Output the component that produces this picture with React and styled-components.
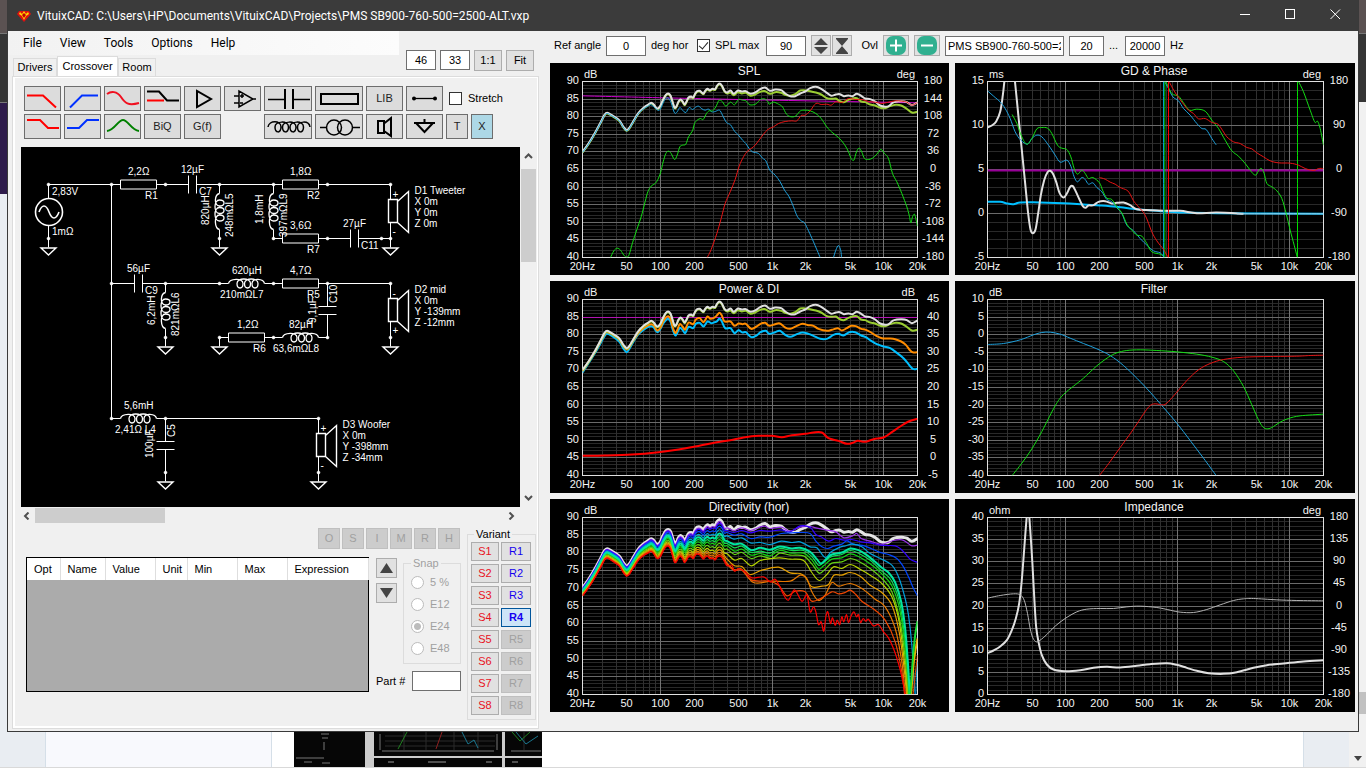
import React from 'react';
import styled, { createGlobalStyle } from 'styled-components';

const GlobalStyle = createGlobalStyle`
  * {
    box-sizing: border-box;
  }
  body {
    margin: 0;
    background: #fff;
    color: #000;
    font-family: 'Liberation Sans', Arial, sans-serif;
    font-size: 11px;
    line-height: 13px;
  }
  button, input {
    font: inherit;
    color: inherit;
    margin: 0;
  }
`;

/* ---------- desktop behind the window ---------- */

const Desktop = styled.div`
  display: flex;
  flex-direction: column;
  min-height: 100vh;
  overflow: hidden;
`;

const Middle = styled.div`
  display: flex;
`;

const LeftEdge = styled.div`
  width: 7px;
  background: linear-gradient(#5b5252 33px, #777 33px 34px, #353535 34px 102px, #777 102px 103px, #2e1b4b 103px 194px, #e9edf2 194px);
`;

const RightEdge = styled.div`
  width: 7px;
  background: linear-gradient(#5b5252 33px, #777 33px 34px, #353535 34px 102px, #f1f1f1 102px 692px, #c1c1c1 692px 714px, #f1f1f1 714px);
`;

const Bottom = styled.div`
  flex: 1;
  display: flex;
  min-height: 37px;
  border-bottom: 2px solid #d9d9d9;
`;

const Block = styled.div`
  width: ${(props) => props.$w}px;
  background: ${(props) => props.$bg};
  border-right: 1px solid ${(props) => props.$line || props.$bg};
`;

const Filler = styled.div`
  flex: 1;
`;

const Thumb = styled.svg`
  display: block;
  width: 248px;
  height: 35px;
`;

const PageScroll = styled.div`
  display: flex;
  justify-content: center;
  align-items: flex-end;
  width: 17px;
  padding-bottom: 6px;
  background: #f1f1f1;
`;

/* ---------- window ---------- */

const Window = styled.div`
  flex: 1;
  min-width: 0;
  background: #f0f0f0;
  border: 1px solid #3a3a3a;
  border-top: none;
`;

const TitleBar = styled.header`
  display: flex;
  align-items: center;
  height: 31px;
  padding-left: 9px;
  background: #3b3b3b;
  color: #fff;
`;

const Title = styled.h1`
  flex: 1;
  margin: 0 0 0 6px;
  font: 400 12px/16px Roboto, sans-serif;
`;

const WinButton = styled.button`
  width: 45px;
  height: 31px;
  padding: 0;
  border: none;
  background: none;
`;

const Body = styled.div`
  display: flex;
`;

const LeftPane = styled.div`
  width: 542px;
  padding-bottom: 2px;
`;

const RightPane = styled.div`
  flex: 1;
  min-width: 0;
  padding-right: 3px;
`;

const Head = styled.div`
  display: flex;
  height: 45px;
`;

const HeadLeft = styled.div`
  display: flex;
  flex-direction: column;
  justify-content: space-between;
  width: 391px;
`;

const Menu = styled.nav`
  display: flex;
  height: 24px;
  padding-left: 6px;
  background: linear-gradient(90deg, #f2f2f2, #fcfcfc);
`;

const MenuItem = styled.button`
  padding: 0 9px;
  border: none;
  background: none;
  font: 400 12px/16px Roboto, sans-serif;
`;

const Tabs = styled.div`
  display: flex;
  align-items: flex-end;
  padding-left: 5px;
`;

const Tab = styled.button`
  width: ${(props) => props.$w}px;
  height: ${(props) => (props.$on ? 20 : 18)}px;
  padding: 0;
  border: 1px solid #dcdcdc;
  border-bottom: none;
  background: ${(props) => (props.$on ? '#fff' : '#f0f0f0')};
`;

const ZoomBar = styled.div`
  display: flex;
  gap: 4px;
  padding: 19px 0 0 7px;
`;

const Field = styled.input`
  width: ${(props) => props.$w}px;
  height: 20px;
  padding: 0 2px;
  border: 1px solid #6f6f6f;
  background: #fff;
  text-align: ${(props) => props.$align || 'center'};
`;

const Button = styled.button`
  display: flex;
  align-items: center;
  justify-content: center;
  width: ${(props) => props.$w}px;
  height: ${(props) => props.$h || 21}px;
  padding: 0;
  border: 1px solid ${(props) => (props.disabled ? '#bfbfbf' : '#adadad')};
  background: ${(props) => (props.disabled ? '#cccccc' : '#e1e1e1')};
  color: ${(props) => (props.disabled ? '#a0a0a0' : props.$color || '#000')};
`;

const VariantButton = styled(Button)`
  ${(props) => props.$on && `
    border-color: #00559b;
    background: #cce4f7;
    font-weight: 700;
  `}
`;

const TabPanel = styled.section`
  margin: 0 11px 0 4px;
  padding: 9px 2px 8px 8px;
  border: 1px solid #dcdcdc;
  box-shadow: inset 2px -2px 0 #fff, inset -1px 1px 0 #fff;
`;

const Tools = styled.div`
  display: grid;
  grid-template-columns: repeat(6, 37px) 48px 48px 37px 37px auto;
  gap: 3px;
  margin: 0 0 8px 3px;
`;

const Tool = styled.button`
  display: flex;
  align-items: center;
  justify-content: center;
  height: 25px;
  padding: 0;
  border: 1px solid #6d6d6d;
  background: ${(props) => (props.$active ? '#add8e6' : '#dcdcdc')};
  color: #222;
  ${(props) => props.$w && `width: ${props.$w}px;`}
  ${(props) => props.$col && `grid-column: ${props.$col};`}

  svg {
    margin: -1px;
    fill: none;
    stroke: #000;
    stroke-width: 2;
  }
`;

const ToolEnd = styled.div`
  display: flex;
  align-items: center;
  gap: 3px;
`;

const CheckLabel = styled.label`
  display: flex;
  align-items: center;
  gap: 6px;
  padding-left: 3px;
`;

const Check = styled.input`
  appearance: none;
  display: grid;
  place-items: center;
  width: 13px;
  height: 13px;
  border: 1px solid #333;
  background: #fff;

  &:checked::after {
    content: '';
    width: 4px;
    height: 8px;
    margin-bottom: 2px;
    border: solid #222;
    border-width: 0 1px 1px 0;
    transform: rotate(40deg);
  }
`;

const CanvasArea = styled.div`
  display: grid;
  grid-template-columns: 1fr 15px;
  grid-template-rows: auto 15px;
  gap: 1px;
`;

const Schematic = styled.svg`
  display: block;
  width: 100%;
  background: #000;
  fill: none;
  stroke: #fff;
  stroke-width: 1;

  text {
    fill: #fff;
    stroke: none;
    font: 10px 'Liberation Sans', Arial, sans-serif;
  }
`;

const ScrollBar = styled.div`
  display: flex;
  flex-direction: ${(props) => (props.$vertical ? 'column' : 'row')};
  align-items: center;
  justify-content: space-between;
  padding: ${(props) => (props.$vertical ? '5px 0' : '0 4px 0 1px')};
`;

const ScrollTrack = styled.div`
  flex: 1;
  align-self: stretch;
  margin: ${(props) => (props.$vertical ? '9px 0' : '0 4px')};
`;

const ScrollThumb = styled.div`
  width: ${(props) => props.$w}px;
  height: ${(props) => props.$h}px;
  background: #cdcdcd;
`;

const Lower = styled.div`
  display: flex;
  gap: 6px;
  margin: 5px 0 0 5px;
`;

const LowerMain = styled.div`
  width: 435px;
`;

const ModeRow = styled.div`
  display: flex;
  justify-content: flex-end;
  gap: 2px;
  margin: 0 1px 8px 0;
`;

const PartsRow = styled.div`
  display: flex;
  gap: 7px;
`;

const PartsBox = styled.div`
  width: 343px;
  height: 135px;
  border: 1px solid #000;
  background: #ababab;
`;

const PartsTable = styled.table`
  width: 100%;
  table-layout: fixed;
  border-collapse: collapse;
  background: #fff;

  th {
    height: 22px;
    padding: 0 7px;
    border-right: 1px solid #dedede;
    font-weight: 400;
    text-align: left;
  }
`;

const Side = styled.div`
  width: 85px;
`;

const SideTop = styled.div`
  display: flex;
  gap: 6px;
  margin-bottom: 7px;
`;

const Arrows = styled.div`
  display: flex;
  flex-direction: column;
  gap: 5px;
  padding-top: 1px;
`;

const Group = styled.fieldset`
  min-width: 0;
  margin: 0;
  padding: 1px ${(props) => props.$pad}px 3px;
  width: ${(props) => props.$w}px;
  height: ${(props) => props.$h}px;
  border: 1px solid #dcdcdc;
  color: ${(props) => (props.disabled ? '#a0a0a0' : '#000')};
`;

const Legend = styled.legend`
  padding: 0 2px;
  margin-left: 3px;
`;

const SnapLegend = styled(Legend)`
  margin-left: 0;
`;

const RadioLabel = styled.label`
  display: flex;
  align-items: center;
  gap: 6px;
  height: 22px;
`;

const Radio = styled.input`
  appearance: none;
  width: 13px;
  height: 13px;
  border: 1px solid #bcbcbc;
  border-radius: 50%;
  background: #fff;

  &:checked {
    background: radial-gradient(#bcbcbc 3px, #fff 4px);
  }
`;

const PartRow = styled.div`
  display: flex;
  align-items: center;
  justify-content: space-between;
`;

const VariantGrid = styled.div`
  display: grid;
  grid-template-columns: 28px 30px;
  gap: 3px 2px;
`;

const TopBar = styled.div`
  display: flex;
  align-items: center;
  gap: 5px;
  height: 29px;
  margin-bottom: 3px;
  padding-left: 4px;
`;

const Caption = styled.label`
  width: ${(props) => props.$w}px;
  text-align: ${(props) => props.$align || 'left'};
  white-space: nowrap;
`;

const Pair = styled.div`
  display: flex;
  gap: 1px;
`;

const Charts = styled.div`
  display: grid;
  grid-template-columns: 399fr 400fr;
  gap: 6px;
`;

const ChartSvg = styled.svg`
  display: block;
  width: 100%;
  background: #000;

  text {
    fill: #f4f4f4;
    font: 11px 'Liberation Sans', Arial, sans-serif;
  }
  .title {
    font-size: 12px;
  }
`;

/* ---------- charts ---------- */

// points are "x,y x,y ..." strings, drawn as a smooth line through all of them
const parse = (text) => text.trim().split(/\s+/).map((p) => p.split(',').map(Number));

const smooth = (pts) => {
  let d = `M${pts[0]}`;
  for (let i = 0; i < pts.length - 1; i++) {
    const a = pts[i - 1] || pts[i];
    const b = pts[i];
    const c = pts[i + 1];
    const e = pts[i + 2] || c;
    d += `C${b[0] + (c[0] - a[0]) / 6} ${b[1] + (c[1] - a[1]) / 6} ${c[0] - (e[0] - b[0]) / 6} ${c[1] - (e[1] - b[1]) / 6} ${c[0]} ${c[1]}`;
  }
  return d;
};

const FREQS = [[20, '20Hz'], [50, '50'], [100, '100'], [200, '200'], [500, '500'], [1000, '1k'], [2000, '2k'], [5000, '5k'], [10000, '10k'], [20000, '20k']];

const freqLines = () => {
  const list = [];
  [10, 100, 1000, 10000].forEach((decade) => {
    for (let i = 1; i < 10; i++) {
      const f = decade * i;
      if (f > 20 && f < 20000) list.push([f, i === 1]);
    }
  });
  return list.sort((a, b) => a[1] - b[1]);
};

const Chart = ({ title, unit, unitRight, left, right, minor, width, height = 212, top = 64, curves }) => {
  const w = width - 64;
  const h = height === 212 ? 176 : 177;
  const x = (f) => Math.round(32 + (Math.log10(f / 20) / 3) * w) + 0.5;
  const steps = left.length - 1;
  const y = (i, n) => Math.round(18 + (i / n) * h) + 0.5;
  const rows = steps * minor;
  return (
    <ChartSvg viewBox={`0 0 ${width} ${height}`} role="img" aria-label={title}>
      <g stroke="#292929">
        {Array.from({ length: rows }, (_, i) => (
          <path key={i} d={`M32 ${y(i, rows)}h${w}`} />
        ))}
      </g>
      {freqLines().map(([f, major]) => (
        <path key={f} d={`M${x(f)} 18v${h}`} stroke={major ? '#737373' : '#303030'} />
      ))}
      <g stroke="#6a6a6a">
        {left.map((label, i) => (
          <path key={label} d={`M32 ${y(i, steps)}h${w}`} />
        ))}
      </g>
      <rect x="32.5" y="18.5" width={w} height={h} fill="none" stroke="#e0e0e0" />
      <svg x="32.5" y="18.5" width={w} height={h} viewBox={`112 ${top} ${w * 3} ${h * 3}`} preserveAspectRatio="none">
        {curves.map(([color, size, pts], i) => (
          <path key={i} d={smooth(typeof pts === 'string' ? parse(pts) : pts)} fill="none" stroke={color} strokeWidth={size * 3} strokeLinejoin="round" />
        ))}
      </svg>
      <text className="title" x="199" y="12" textAnchor="middle">{title}</text>
      <text x="34" y="15">{unit}</text>
      <text x={width - 34} y="15" textAnchor="end">{unitRight}</text>
      {left.map((label, i) => (
        <text key={label} x="29" y={y(i, steps) + 2} textAnchor="end">{label}</text>
      ))}
      {right.map((label, i) => (
        <text key={label} x={width - 16} y={y(i, right.length - 1) + 2} textAnchor="middle">{label}</text>
      ))}
      {FREQS.map(([f, label]) => (
        <text key={f} x={x(f)} y={height - 5} textAnchor="middle">{label}</text>
      ))}
    </ChartSvg>
  );
};

const range = (from, to, step) => {
  const list = [];
  for (let v = from; v >= to; v -= step) list.push(v);
  return list;
};

const LOW = '112,275 130,250 150,217 168,183 178,164 186,158 200,165 222,180 234,199 244,210 252,204 264,184 280,158 295,143 308,134 318,128 326,133 332,142 338,145 346,136 354,118 362,104 369,100 376,106 382,124 388,142 394,138 400,124 406,118 412,123 418,133 424,124 430,112 438,109 444,112 450,100 456,93 464,92 470,97 475,100 480,92 487,86 494,90 502,86 510,87 516,76 523,70 530,76 538,92';
const ON_AXIS = `${LOW} 546,97 556,91 566,101 578,91 590,94 602,93 616,101 630,97 645,87 660,82 674,92 690,88 708,90 720,100 735,108 750,108 765,100 780,94 795,84 812,80 828,86 845,98 858,107 872,103 884,102 896,108 910,106 922,108 935,101 948,107 960,115 975,117 990,124 1005,136 1020,140 1032,137 1042,128 1055,124 1070,123 1085,126 1100,135 1117,127`;
const LISTENING = [
  ...parse(LOW).map(([x, y]) => [x, y + 2]),
  ...parse('546,100 556,97 566,105 578,96 590,100 602,98 616,107 630,103 645,95 660,93 674,101 690,96 708,98 720,104 735,107 750,102 765,91 780,91 795,93 812,97 828,103 845,114 860,116 872,115 884,123 896,126 910,119 922,115 935,114 948,124 960,126 975,133 990,136 1005,143 1020,144 1035,138 1052,134 1068,136 1082,144 1100,157 1117,155'),
];

const SPL = [
  ['#d000d0', 1, '112,107 400,114 680,120 1117,128'],
  ['#9acd32', 2, LISTENING],
  ['#e0e0e0', 2, ON_AXIS],
  ['#1ea0dc', 1, '112,277 130,252 150,219 168,185 178,166 186,160 200,167 222,182 234,201 244,212 252,206 264,186 280,160 295,146 308,138 318,134 338,150 346,146 354,128 362,115 370,114 378,128 388,158 396,155 404,142 412,150 422,157 432,142 442,148 450,142 460,138 470,146 480,150 490,147 500,155 510,154 523,150 532,165 544,187 556,194 568,213 580,225 592,240 602,250 612,265 622,275 640,280 652,294 662,302 674,330 690,345 705,365 718,390 732,410 745,440 756,468 768,482 778,488 790,512 805,545 825,592'],
  ['#1ea0dc', 1, '865,592 872,570 880,556 887,572 889,592'],
  ['#14dc14', 1, '196,592 206,572 216,564 226,570 236,585 245,591 252,583 262,548 275,508 288,470 300,424 308,395 318,378 330,370 338,358 346,338 354,305 362,280 370,273 378,280 388,298 396,285 404,260 412,255 422,252 430,230 442,212 448,190 456,180 466,175 474,178 484,160 492,152 502,152 512,140 522,120 532,125 542,138 556,126 568,134 580,118 592,120 602,122 612,133 624,134 634,130 646,118 658,116 668,124 672,132 685,126 700,132 712,140 724,162 738,170 752,167 766,152 780,150 795,152 812,160 828,175 845,200 860,216 880,232 898,253 910,275 918,295 926,300 934,275 942,264 950,276 958,295 970,298 982,294 995,282 1007,268 1018,280 1030,295 1042,340 1055,365 1070,400 1085,440 1092,465 1097,488 1102,470 1108,462 1113,480 1117,498'],
  ['#e61414', 1, '486,592 498,568 515,520 528,475 540,430 555,395 570,358 582,318 595,290 608,272 625,260 640,242 655,222 668,208 685,200 700,190 720,184 740,182 755,182 768,166 780,165 795,152 812,130 828,133 845,132 858,135 872,125 890,127 910,115 930,118 950,118 970,124 990,126 1010,130 1030,126 1050,122 1070,123 1085,126 1100,135 1117,127'],
];

const GD = [
  ['#960096', 2, '112,331 1120,331'],
  ['#00bfff', 2, '112,425 150,425 170,430 190,432 210,427 250,426 340,429 400,433 450,436 500,440 560,447 620,452 700,457 800,459 1120,461'],
  ['#e0e0e0', 2, '112,202 125,196 138,184 150,155 158,105 163,60'],
  ['#e0e0e0', 2, '194,60 200,120 208,200 218,300 226,380 234,460 241,508 248,519 256,508 264,460 272,405 282,360 292,336 300,332 308,340 318,365 328,398 340,412 350,400 360,380 368,378 376,392 388,418 398,438 406,443 415,436 430,435 445,425 465,423 485,430 500,428 520,427 540,435 560,447 600,450 640,452 690,452 740,459 800,457 880,461'],
  ['#a8cfe4', 1, '860,461 1120,461'],
  ['#1ea0dc', 1, '112,92 135,112 150,125 165,145 180,175 195,215 212,240 232,252 245,235 260,225 275,230 295,255 315,285 330,306 350,300 362,318 372,350 382,365 395,352 405,358 415,372 428,368 440,382 455,395 470,418 485,425 500,443 515,460 530,495 550,512 570,535 590,555 610,572 630,578 641,590'],
  ['#1ea0dc', 1, '643,64 655,85 668,110 685,122 700,145 720,165 740,190 755,205 768,208 785,235 798,254'],
  ['#14dc14', 1, '186,163 200,190 215,230 230,252 245,235 260,206 275,202 292,204 305,220 322,255 335,264 350,268 362,290 372,325 382,342 395,330 405,340 415,355 428,352 448,368 458,392 470,414 485,418 500,441 515,458 530,492 545,510 560,525 575,528 590,550 605,575 630,582 642,590'],
  ['#14dc14', 1, '647,64 665,100 685,108 700,128 718,150 740,147 765,153 785,180 805,205 825,240 845,272 865,288 885,310 900,330 910,342 918,344 926,330 934,325 942,340 950,370 965,380 980,392 995,415 1008,460 1020,510 1032,555 1041,590'],
  ['#00a0c8', 1, '640,64 640,592'],
  ['#00d200', 1, '644,64 644,592'],
  ['#00dc00', 1, '1042,64 1042,592'],
  ['#14dc14', 1, '1045,64 1060,95 1080,150 1094,186 1102,183 1110,205 1120,255'],
  ['#e61414', 1, '448,352 465,357 480,366 495,372 510,382 530,390 540,402 550,422 565,440 585,465 605,515 620,542 640,568 650,585 653,590'],
  ['#ff0000', 1, '655,64 655,592'],
  ['#e61414', 1, '657,64 665,80 680,105 700,132 715,150 730,160 745,176 765,175 785,187 803,192 818,212 830,230 850,245 870,250 890,262 905,266 920,278 940,290 960,302 985,308 1020,309 1045,315 1065,325 1090,331 1105,325 1120,325'],
];

const POWER = [
  ['#b414b4', 1, '112,118 1117,118'],
  ['#00bfff', 2, '112,283 150,224 178,174 186,167 200,173 222,190 234,210 244,222 252,213 264,192 280,168 295,155 308,147 318,144 326,148 332,158 338,162 346,152 354,136 362,126 369,122 376,130 382,152 390,171 396,165 404,149 412,155 420,165 430,146 444,150 452,137 464,134 475,145 487,130 498,135 508,132 515,130 523,121 530,130 540,150 556,150 568,165 580,156 592,163 602,162 618,177 634,172 646,162 662,158 672,167 690,162 704,158 720,170 735,176 755,168 772,163 790,167 805,173 825,182 845,182 865,170 880,167 895,172 912,162 930,162 948,172 962,177 978,188 995,198 1015,205 1035,210 1055,224 1075,240 1090,258 1103,272 1117,272'],
  ['#ff8c00', 2, '112,279 150,220 178,168 186,162 200,168 222,184 234,203 244,214 252,208 264,188 280,164 295,150 308,142 318,138 326,142 332,152 338,157 346,148 354,130 362,118 369,114 376,122 382,145 390,164 396,156 404,138 412,145 420,154 430,133 444,138 452,124 464,120 475,132 487,115 496,122 508,118 515,112 523,104 530,112 538,130 556,130 568,143 580,136 592,138 602,137 618,152 634,145 646,137 660,134 672,143 690,138 704,136 720,148 735,152 755,143 772,137 790,141 805,143 820,152 845,158 860,155 878,150 890,157 905,150 918,143 932,144 948,152 962,155 978,163 995,174 1010,180 1030,181 1050,183 1068,190 1082,200 1095,217 1105,223 1117,222'],
  ['#9acd32', 2, LISTENING],
  ['#e0e0e0', 2, ON_AXIS],
  ['#ff0000', 2, '112,533 180,532 260,529 340,522 400,514 450,505 500,495 550,487 600,477 640,473 680,473 710,477 740,471 780,467 805,463 830,463 850,480 880,488 905,497 925,493 938,488 960,491 985,483 1015,478 1040,462 1065,445 1090,430 1117,422'],
];

const FILTER = [
  ['#1ea0dc', 1, '112,199 160,196 210,185 250,170 275,163 300,162 330,168 360,180 400,196 440,212 480,232 520,262 560,300 600,342 640,388 680,435 720,487 760,540 798,592'],
  ['#14dc14', 1, '186,592 215,555 245,512 275,460 310,392 330,360 350,340 370,324 400,300 440,263 475,237 500,224 530,217 570,215 620,217 680,221 740,228 785,237 820,250 850,278 880,325 905,380 925,425 938,446 950,452 965,448 990,432 1015,421 1050,413 1120,408'],
  ['#e61414', 1, '448,592 480,550 510,508 540,467 565,430 585,400 600,382 615,377 640,380 655,370 680,342 710,307 745,275 780,256 820,244 880,237 960,235 1040,234 1080,232 1120,231'],
];

const IMPEDANCE = [
  ['#e0e0e0', 2, '112,474 130,466 150,454 170,435 185,405 197,370 207,325 214,265 220,190 226,110 230,60'],
  ['#e0e0e0', 2, '237,60 242,130 247,210 253,320 258,395 265,440 275,480 290,508 310,523 345,528 390,525 430,518 470,515 510,517 560,512 600,507 650,504 680,509 710,518 740,527 775,534 820,536 860,531 910,518 950,510 1000,505 1060,499 1120,495'],
  ['#b4b4b4', 1, '112,309 150,301 190,296 210,299 222,315 232,355 240,400 248,428 258,440 270,435 290,418 315,393 345,370 380,350 410,342 450,340 490,340 530,335 570,333 620,337 660,345 690,351 730,352 770,343 810,329 850,316 880,311 910,310 980,314 1040,316 1120,317'],
];

// off-axis responses share the low end and spread apart towards the midrange
const spread = (x) => {
  const table = [[112, 24], [186, 28], [244, 30], [318, 38], [369, 50], [440, 74], [523, 110], [540, 104]];
  for (let i = 1; i < table.length; i++) {
    const [x0, y0] = table[i - 1];
    const [x1, y1] = table[i];
    if (x <= x1) return y0 + ((x - x0) / (x1 - x0)) * (y1 - y0);
  }
  return 104;
};

const offAxis = (part, tail) => [
  ...parse(LOW).map(([x, y]) => [x, y + 3 + part * spread(x)]),
  ...parse(tail),
];

const DIRECTIVITY = [
  ['#e6e6e6', 3, parse(ON_AXIS).map(([x, y]) => [x, y + 3])],
  ['#9632e6', 1.2, offAxis(0.05, '546,98 566,106 590,98 616,106 645,95 660,93 674,100 708,96 735,108 765,95 795,94 812,98 845,105 872,110 896,128 922,122 935,115 948,130 975,138 1005,147 1020,145 1045,136 1070,134 1085,142 1100,152 1117,150')],
  ['#3200ff', 1.2, offAxis(0.1, '546,106 566,112 590,106 616,113 645,106 674,108 708,104 735,110 765,92 795,97 812,118 828,125 850,138 872,130 896,135 920,133 948,140 975,143 1005,150 1025,151 1050,152 1065,160 1080,175 1095,192 1117,202')],
  ['#0046ff', 1.2, offAxis(0.18, '546,112 566,120 590,116 616,130 645,125 674,126 708,115 740,113 765,112 795,115 812,138 830,155 848,160 865,153 890,147 905,137 925,147 960,153 1000,170 1030,178 1055,190 1075,215 1090,245 1105,280 1117,302')],
  ['#00a0dc', 1.2, offAxis(0.28, '546,122 566,132 590,128 616,143 645,142 674,148 708,138 740,142 765,140 795,155 815,158 840,187 858,170 880,158 900,152 922,147 950,155 975,175 1010,192 1040,210 1060,245 1080,310 1090,360 1100,450 1107,560 1110,597')],
  ['#14dc50', 1.2, offAxis(0.47, '546,145 568,158 590,153 618,172 645,168 674,174 704,160 740,166 775,166 800,184 820,210 835,202 860,184 890,178 915,166 940,174 975,195 1010,228 1040,258 1065,330 1082,460 1092,597')],
  ['#14d214', 1.2, offAxis(0.55, '546,152 568,168 590,162 618,180 645,175 674,182 704,166 740,174 775,174 800,194 820,222 835,212 860,192 890,188 915,176 940,184 975,206 1010,236 1040,272 1065,350 1082,480 1090,597')],
  ['#64d214', 1.2, offAxis(0.65, '546,162 568,178 590,172 618,190 645,182 680,190 704,174 735,180 775,182 800,206 822,234 840,222 860,204 890,200 915,190 940,198 975,220 1010,250 1040,290 1065,380 1080,490 1088,597')],
  ['#b4d200', 1.2, offAxis(0.75, '546,176 568,195 590,190 618,212 645,196 680,190 704,188 735,192 775,196 800,232 822,256 845,238 865,215 890,220 915,208 945,222 975,240 1010,265 1040,305 1062,380 1080,520 1086,597')],
  ['#e6a000', 1.2, offAxis(0.83, '546,192 568,212 590,214 615,238 650,225 700,216 735,233 765,235 780,245 800,275 830,273 850,268 866,240 890,240 915,232 945,243 975,270 1010,292 1040,330 1062,410 1078,530 1084,597')],
  ['#e67800', 1.2, offAxis(0.9, '546,205 568,224 590,222 625,262 680,258 735,258 765,240 785,250 800,290 820,316 840,300 860,262 880,273 915,265 950,280 990,312 1020,335 1050,400 1070,500 1080,597')],
  ['#f04600', 1.2, offAxis(0.96, '546,208 568,226 590,225 620,255 670,258 700,270 725,302 750,288 780,290 800,318 830,308 860,290 880,296 900,292 915,285 932,298 950,318 990,345 1020,375 1050,440 1070,530 1078,597')],
  ['#fa0000', 1.2, offAxis(1, '546,212 560,210 568,228 580,220 600,230 620,248 655,245 675,260 690,252 704,275 715,298 730,315 748,284 770,318 785,300 795,350 805,335 812,350 820,388 828,380 836,408 842,365 848,350 856,385 862,368 870,390 876,375 884,388 890,365 896,380 904,358 910,382 918,362 926,350 934,365 940,358 946,382 954,370 962,378 970,372 984,392 1000,388 1015,410 1030,428 1045,460 1060,505 1070,545 1080,597')],
  ['#00e6a0', 2, offAxis(0.38, '546,138 566,147 590,146 618,165 645,158 674,164 704,154 740,160 765,158 795,170 815,192 828,205 845,190 860,178 890,172 915,160 940,165 965,180 990,200 1010,218 1030,232 1050,262 1068,320 1080,400 1088,500 1094,597')],
  ['#00a0dc', 1, '1112,597 1114,540 1117,500'],
  ['#f04600', 1, '1104,597 1110,540 1117,480'],
  ['#e6b400', 2, '1098,597 1106,500 1117,430'],
  ['#14dc32', 2, '1095,597 1104,480 1110,420 1117,378'],
];

/* ---------- crossover schematic ---------- */

const Dot = ({ x, y }) => <circle cx={x} cy={y} r="1.5" fill="#fff" stroke="#fff" strokeWidth=".5" />;

const Resistor = ({ x, y }) => (
  <path d={`M${x} ${y}h9m36 0h9M${x + 9} ${y - 4.5}h36v9h-36z`} />
);

const Capacitor = ({ x, y, turn = 0 }) => (
  <path transform={`translate(${x} ${y}) rotate(${turn})`} d="M0 0h23m0 -9v18m8 -18v18m0 -9h23" />
);

const Coil = ({ x, y, turn = 0 }) => (
  <g transform={`translate(${x} ${y}) rotate(${turn})`}>
    <path d="M0 0h9M45 0h9" />
    <path strokeWidth="1.3" d="M9 0C10 -5 23.5 -6 23.5 0S17.500 6 17.5 0S31 -6 31 0S25 6 25 0S38.5 -6 38.5 0S32.5 6 32.500 0S44 -5 45 0" />
  </g>
);

const Ground = ({ x, y }) => (
  <g>
    <Dot x={x} y={y} />
    <path d={`M${x} ${y}v9`} />
    <path strokeWidth="1.4" d={`M${x - 7.5} ${y + 9.5}h15l-7.5 7z`} />
  </g>
);

const Driver = ({ x, y, lines, flip }) => (
  <g>
    <Dot x={x} y={y} />
    <path d={`M${x} ${y}v15M${x} ${y + 38}v16`} />
    <path strokeWidth="1.4" d={`M${x - 2} ${y + 15}h9v23h-9zM${x + 7} ${y + 17}l11 -10v41l-11 -10`} />
    <text x={x + 2} y={y + 13}>{flip ? '-' : '+'}</text>
    <text x={x + 2} y={y + 50}>{flip ? '+' : '-'}</text>
    {lines.map((line, i) => (
      <text key={line} x={x + 24} y={y + 9 + i * 11}>{line}</text>
    ))}
    <Ground x={x} y={y + 54} />
  </g>
);

const LABELS = [
  [107, 28, '2,2Ω'], [124, 52, 'R1'], [31, 48, '2,83V'], [31, 88, '1mΩ'], [160, 26, '12µF'], [178, 48, 'C7'],
  [106, 125, '56µF'], [124, 147, 'C9'], [211, 127, '620µH'], [199, 151, '210mΩL7'], [216, 181, '1,2Ω'],
  [269, 28, '1,8Ω'], [286, 52, 'R2'], [269, 82, '3,6Ω'], [286, 106, 'R7'], [322, 80, '27µF'], [340, 102, 'C11'],
  [269, 127, '4,7Ω'], [286, 151, 'R5'], [268, 181, '82µH'], [232, 205, 'R6'], [252, 205, '63,6mΩ'], [287, 205, 'L8'],
  [103, 262, '5,6mH'], [94, 286, '2,41Ω L4'],
];

const UPRIGHT_LABELS = [
  [188, 78, '820µH'], [212, 90, '248mΩL5'], [242, 77, '1,8mH'], [266, 90, '397mΩL9'], [134, 178, '6,2mH'],
  [158, 189, '821mΩL6'], [316, 156, 'C10'], [295, 176, '9,1µF'], [132, 311, '100µF'], [154, 290, 'C5'],
];

const DOTS = [
  [27.5, 37.5], [90.5, 37.5], [144.5, 37.5], [198.5, 37.5], [252.5, 37.5], [306.5, 37.5],
  [252.5, 91.5], [306.5, 91.5], [360.5, 91.5],
  [90.5, 136.5], [144.5, 136.5], [198.5, 136.5], [252.5, 136.5], [306.5, 136.5],
  [252.5, 190.5], [306.5, 190.5], [90.5, 271.5], [144.5, 271.5],
];

const Circuit = () => (
  <Schematic viewBox="0 0 499 360" role="img" aria-label="Crossover schematic">
    <path d="M27.5 37.5H90.5V271.5M198.5 37.5H252.5M306.5 37.5H369.5M360.5 91.5h9M144.5 136.5h54M306.5 136.5h63M144.5 271.5h153M27.5 37.5v14M27.5 79v13" />
    <circle cx="28" cy="65" r="13.5" strokeWidth="1.6" />
    <path strokeWidth="1.6" d="M18 65c3 -8 7 -8 10 0s7 8 10 0" />
    <Resistor x={90.5} y={37.5} />
    <Capacitor x={144.5} y={37.5} />
    <Coil x={198.5} y={91.5} turn={-90} />
    <Coil x={252.5} y={91.5} turn={-90} />
    <Resistor x={252.5} y={37.5} />
    <Resistor x={252.5} y={91.5} />
    <Capacitor x={306.5} y={91.5} />
    <Capacitor x={90.5} y={136.5} />
    <Coil x={144.5} y={190.5} turn={-90} />
    <Coil x={198.5} y={136.5} />
    <Resistor x={252.5} y={136.5} />
    <Capacitor x={306.5} y={136.5} turn={90} />
    <Resistor x={198.5} y={190.5} />
    <Coil x={252.5} y={190.5} />
    <Coil x={90.5} y={271.5} />
    <Capacitor x={144.5} y={271.5} turn={90} />
    <Ground x={27.5} y={91.5} />
    <Ground x={198.5} y={91.5} />
    <Ground x={144.5} y={190.5} />
    <Ground x={198.5} y={190.5} />
    <Ground x={144.5} y={325.5} />
    <Driver x={369.5} y={37.5} lines={['D1 Tweeter', 'X 0m', 'Y 0m', 'Z 0m']} />
    <Driver x={369.5} y={136.5} flip lines={['D2 mid', 'X 0m', 'Y -139mm', 'Z -12mm']} />
    <Driver x={297.5} y={271.5} lines={['D3 Woofer', 'X 0m', 'Y -398mm', 'Z -34mm']} />
    {DOTS.map(([x, y]) => <Dot key={`${x}-${y}`} x={x} y={y} />)}
    {LABELS.map(([x, y, t]) => <text key={t} x={x} y={y}>{t}</text>)}
    {UPRIGHT_LABELS.map(([x, y, t]) => <text key={t} transform={`translate(${x} ${y}) rotate(-90)`}>{t}</text>)}
  </Schematic>
);

/* ---------- small drawings ---------- */

const Icon = ({ w = 37, children }) => <svg width={w} height="25" viewBox={`0 0 ${w} 25`}>{children}</svg>;

const Chevron = ({ turn }) => (
  <svg width="9" height="8" viewBox="0 0 9 8">
    <path transform={`rotate(${turn} 4.5 4)`} d="M1 6l3.5 -3.5L8 6" fill="none" stroke="#505050" strokeWidth="2" />
  </svg>
);

const Triangle = ({ down }) => (
  <svg width="15" height="12" viewBox="0 0 15 12">
    <path d={down ? 'M1 1h13L7.5 11z' : 'M1 11h13L7.5 1z'} fill="#444" />
  </svg>
);

const RoundSign = ({ plus }) => (
  <svg width="22" height="19" viewBox="0 0 22 19">
    <rect x="1" width="20" height="19" rx="7" fill="#30b090" />
    <path d={`M5 9.5h12${plus ? 'M11 3.5v12' : ''}`} stroke="#fff" strokeWidth="2" />
  </svg>
);

const COLUMNS = [['Opt', 33], ['Name', 45], ['Value', 50], ['Unit', 32], ['Min', 50], ['Max', 50], ['Expression', 81]];

const Toolbox = () => (
  <Tools>
    <Tool aria-label="Low pass"><Icon><path stroke="#f00" d="M3 9.5H19L32 21.5" /></Icon></Tool>
    <Tool aria-label="High pass"><Icon><path stroke="#0030ff" d="M6 21.5L18 9.5H34" /></Icon></Tool>
    <Tool aria-label="Peak"><Icon><path stroke="#f01020" d="M3 8C7 5 13 5 17 11S24 20 35 17" /></Icon></Tool>
    <Tool aria-label="Shelf"><Icon><path stroke="#f00" d="M3 14.5H20" /><path d="M3 5.5H15L23 14.5H35" /></Icon></Tool>
    <Tool aria-label="Buffer"><Icon><path d="M13 5V21L27 13z" /></Icon></Tool>
    <Tool aria-label="Operational amplifier"><Icon><path strokeWidth="1.5" d="M15 5V21L29 13zM10 10h5M10 17h5M29 13h3M16 10h4M18 8v4M16 17h3" /></Icon></Tool>
    <Tool aria-label="Capacitor"><Icon w={48}><path d="M21 3V23M29 3V23" /><path strokeWidth="1.3" d="M4 13.5H21M29 13.5H46" /></Icon></Tool>
    <Tool aria-label="Resistor"><Icon w={48}><path d="M6 8H43V18H6z" /></Icon></Tool>
    <Tool>LIB</Tool>
    <Tool aria-label="Wire"><Icon><path strokeWidth="1.3" d="M8 12.5H29" /><circle cx="8" cy="12.5" r="1" /><circle cx="29" cy="12.5" r="1" /></Icon></Tool>
    <CheckLabel><Check type="checkbox" />Stretch</CheckLabel>

    <Tool aria-label="Low shelf"><Icon><path stroke="#f00" d="M3 6H16L24 14H35" /></Icon></Tool>
    <Tool aria-label="High shelf"><Icon><path stroke="#0030ff" d="M3 14H15L23 6H35" /></Icon></Tool>
    <Tool aria-label="Bell"><Icon><path stroke="#008000" d="M3 17C11 16 14 6 19 6S27 16 35 17" /></Icon></Tool>
    <Tool>BiQ</Tool>
    <Tool>G(f)</Tool>
    <Tool $col={7} aria-label="Inductor"><Icon w={48}><path strokeWidth="1.5" d="M4 13C5 6 17 6 17 13S11 19 11 13S24.5 6 24.5 13S18.5 19 18.5 13S32 6 32 13S26 19 26 13S39.5 6 39.5 13S33.5 19 33.5 13S45 6 46 13" /></Icon></Tool>
    <Tool aria-label="Transformer"><Icon w={48}><g strokeWidth="1.5"><circle cx="19" cy="13.5" r="7.5" /><circle cx="30" cy="13.5" r="7.5" /><path d="M5 13.5H11M38 13.5H45" /></g></Icon></Tool>
    <Tool aria-label="Driver"><Icon><path d="M12 7H18V19H12zM18 9.5L25 4V22L18 17" /></Icon></Tool>
    <Tool aria-label="Ground"><Icon><path d="M8 9H29M10 9L18.5 18L27 9M18.5 5V9" /></Icon></Tool>
    <ToolEnd>
      <Tool $w={22}>T</Tool>
      <Tool $w={22} $active>X</Tool>
    </ToolEnd>
  </Tools>
);

const CrossoverTab = () => (
  <TabPanel>
    <Toolbox />
    <CanvasArea>
      <Circuit />
      <ScrollBar $vertical>
        <Chevron turn={0} />
        <ScrollTrack $vertical><ScrollThumb $w={15} $h={93} /></ScrollTrack>
        <Chevron turn={180} />
      </ScrollBar>
      <ScrollBar>
        <Chevron turn={-90} />
        <ScrollTrack><ScrollThumb $w={130} $h={15} /></ScrollTrack>
        <Chevron turn={90} />
      </ScrollBar>
    </CanvasArea>
    <Lower>
      <LowerMain>
        <ModeRow>
          {['O', 'S', 'I', 'M', 'R', 'H'].map((t) => <Button key={t} $w={22} disabled>{t}</Button>)}
        </ModeRow>
        <PartsRow>
          <PartsBox>
            <PartsTable>
              <colgroup>
                {COLUMNS.map(([name, w]) => <col key={name} width={w} />)}
              </colgroup>
              <thead>
                <tr>{COLUMNS.map(([name]) => <th key={name}>{name}</th>)}</tr>
              </thead>
            </PartsTable>
          </PartsBox>
          <Side>
            <SideTop>
              <Arrows>
                <Button $w={21} $h={20} aria-label="Move up"><Triangle /></Button>
                <Button $w={21} $h={20} aria-label="Move down"><Triangle down /></Button>
              </Arrows>
              <Group $w={58} $h={107} $pad={7} disabled>
                <SnapLegend>Snap</SnapLegend>
                {['5 %', 'E12', 'E24', 'E48'].map((t) => (
                  <RadioLabel key={t}>
                    <Radio type="radio" name="snap" defaultChecked={t === 'E24'} />
                    {t}
                  </RadioLabel>
                ))}
              </Group>
            </SideTop>
            <PartRow>
              <label htmlFor="part">Part #</label>
              <Field id="part" $w={49} />
            </PartRow>
          </Side>
        </PartsRow>
      </LowerMain>
      <Group $w={69} $h={192} $pad={3}>
        <Legend>Variant</Legend>
        <VariantGrid>
          {[1, 2, 3, 4, 5, 6, 7, 8].map((n) => (
            <React.Fragment key={n}>
              <VariantButton $h={19} $color="#e81123">S{n}</VariantButton>
              <VariantButton $h={19} $color="#1400f0" $on={n === 4} disabled={n > 4}>R{n}</VariantButton>
            </React.Fragment>
          ))}
        </VariantGrid>
      </Group>
    </Lower>
  </TabPanel>
);

const ChartBar = () => (
  <TopBar>
    <Caption htmlFor="angle" $w={47}>Ref angle</Caption>
    <Field id="angle" $w={40} defaultValue="0" />
    <Caption htmlFor="angle" $w={41}>deg hor</Caption>
    <Check id="splmax" type="checkbox" defaultChecked />
    <Caption htmlFor="splmax" $w={46}>SPL max</Caption>
    <Field aria-label="SPL max value" $w={40} defaultValue="90" />
    <Pair>
      <Button $w={20} aria-label="Shift range">
        <svg width="16" height="18" viewBox="0 0 16 18"><path d="M1 8h14L8 1zM1 10h14L8 17z" fill="#444" /></svg>
      </Button>
      <Button $w={20} aria-label="Fit range">
        <svg width="16" height="18" viewBox="0 0 16 18"><path d="M2 1h12v1L8 9L14 16v1H2v-1L8 9L2 2z" fill="#444" /></svg>
      </Button>
    </Pair>
    <Caption htmlFor="overlay" $w={21} $align="right">Ovl</Caption>
    <Button $w={26} aria-label="Add overlay"><RoundSign plus /></Button>
    <Button $w={26} aria-label="Remove overlay"><RoundSign /></Button>
    <Field id="overlay" $w={119} $align="left" defaultValue="PMS SB900-760-500=2500-ALT" />
    <Field aria-label="From frequency" $w={35} defaultValue="20" />
    <Caption htmlFor="to" $w={11}>...</Caption>
    <Field id="to" $w={40} defaultValue="20000" />
    <Caption htmlFor="to" $w={20}>Hz</Caption>
  </TopBar>
);

const SPL_DEG = [180, 144, 108, 72, 36, 0, -36, -72, -108, -144, -180];

export default function App() {
  return (
    <Desktop>
      <GlobalStyle />
      <Middle>
        <LeftEdge />
        <Window>
          <TitleBar>
            <svg width="14" height="12" viewBox="0 0 14 12">
              <path d="M0 4L2 1H12L14 4L7 12z" fill="#e01010" />
              <path d="M3 2L5 4L7 1L9 4L11 2L12 4L9 6L7 10L5 6L2 4z" fill="#ffd800" />
              <path d="M5 5L7 3L9 5L7 8z" fill="#c00000" />
            </svg>
            <Title>VituixCAD: C:\Users\HP\Documents\VituixCAD\Projects\PMS SB900-760-500=2500-ALT.vxp</Title>
            <WinButton aria-label="Minimize"><svg width="11" height="11"><path d="M0 5.5H10" stroke="#fff" /></svg></WinButton>
            <WinButton aria-label="Maximize"><svg width="11" height="11"><rect x=".5" y=".5" width="9" height="9" fill="none" stroke="#fff" /></svg></WinButton>
            <WinButton aria-label="Close"><svg width="11" height="11"><path d="M.5 .5L10 10M10 .5L.5 10" stroke="#fff" /></svg></WinButton>
          </TitleBar>
          <Body>
            <LeftPane>
              <Head>
                <HeadLeft>
                  <Menu>
                    {['File', 'View', 'Tools', 'Options', 'Help'].map((t) => <MenuItem key={t}>{t}</MenuItem>)}
                  </Menu>
                  <Tabs>
                    <Tab $w={44}>Drivers</Tab>
                    <Tab $w={61} $on>Crossover</Tab>
                    <Tab $w={38}>Room</Tab>
                  </Tabs>
                </HeadLeft>
                <ZoomBar>
                  <Field aria-label="Grid columns" $w={30} defaultValue="46" />
                  <Field aria-label="Grid rows" $w={30} defaultValue="33" />
                  <Button $w={28}>1:1</Button>
                  <Button $w={28}>Fit</Button>
                </ZoomBar>
              </Head>
              <CrossoverTab />
            </LeftPane>
            <RightPane>
              <ChartBar />
              <Charts>
                <Chart title="SPL" unit="dB" unitRight="deg" width={399} minor={5} left={range(90, 40, 5)} right={SPL_DEG} curves={SPL} />
                <Chart title="GD & Phase" unit="ms" unitRight="deg" width={400} minor={5} left={range(15, -5, 5)} right={range(180, -180, 90)} curves={GD} />
                <Chart title="Power & DI" unit="dB" unitRight="dB" width={399} minor={5} left={range(90, 40, 5)} right={range(45, -5, 5)} curves={POWER} />
                <Chart title="Filter" unit="dB" width={400} minor={5} left={range(10, -40, 5)} right={[]} curves={FILTER} />
                <Chart title="Directivity (hor)" unit="dB" width={399} height={213} top={67} minor={5} left={range(90, 40, 5)} right={[]} curves={DIRECTIVITY} />
                <Chart title="Impedance" unit="ohm" unitRight="deg" width={400} height={213} top={67} minor={5} left={range(40, 0, 5)} right={range(180, -180, 45)} curves={IMPEDANCE} />
              </Charts>
            </RightPane>
          </Body>
        </Window>
        <RightEdge />
      </Middle>
      <Bottom>
        <Block $w={46} $bg="#e9edf2" $line="#d5dfe8" />
        <Block $w={226} $bg="#f8f9fd" $line="#d5dfe8" />
        <Block $w={22} $bg="#fff" />
        <Thumb viewBox="0 0 248 35">
          <path fill="#060606" d="M0 0h248v35H0z" />
          <path fill="#ccc" d="M71 0h9v35h-9zM80 24h168v2H80zM208 0h3v35h-3z" />
          <g fill="none" stroke="#777">
            <path d="M27 2h8M28 6h6M30 10v8M2 26h28M10 30h8M28 31h8M88 19h112M86 2v16M203 2v16M217 19h30" />
            <path stroke="#2b2b2b" d="M91 4h110M91 9h110M91 14h110M110 0v18M132 0v18M160 0v18M184 0v18M230 0v18" />
            <path stroke="#208020" d="M104 17L113 0M218 0L226 9L236 0" />
            <path stroke="#902020" d="M142 17L148 0" />
            <path stroke="#1a7890" d="M168 0L174 12L180 8L184 16M222 0L232 12L244 4" />
            <path stroke="#999" d="M134 30h18M94 30h6M192 30h6M218 30h6" />
          </g>
        </Thumb>
        <Filler />
        <Block $w={1} $bg="#d5dfe8" />
        <Block $w={45} $bg="#e9edf2" />
        <PageScroll>
          <svg width="8" height="5"><path d="M0 0h8L4 5z" fill="#444" /></svg>
        </PageScroll>
      </Bottom>
    </Desktop>
  );
}
